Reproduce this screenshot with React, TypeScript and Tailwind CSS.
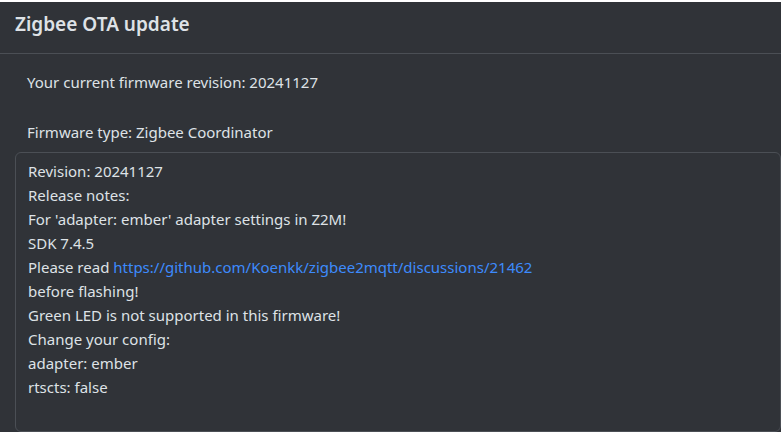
import React from "react";

export default function App() {
  const lines: React.ReactNode[] = [
    "Revision: 20241127",
    "Release notes:",
    "For 'adapter: ember' adapter settings in Z2M!",
    "SDK 7.4.5",
    <>
      Please read{" "}
      <a className="text-[#3d8bfd]" href="#">
        https://github.com/Koenkk/zigbee2mqtt/discussions/21462
      </a>
    </>,
    "before flashing!",
    "Green LED is not supported in this firmware!",
    "Change your config:",
    "adapter: ember",
    "rtscts: false",
  ];
  return (
    <div className="w-[782px] h-[434px] bg-white overflow-hidden" style={{ fontFamily: '"Noto Sans", sans-serif' }}>
      <div className="mt-[2px] w-[781px] h-[430px] bg-[#303338] text-[#dee2e6] flex flex-col overflow-hidden">
        <div className="h-[52px] border-b border-[#4b4f55] px-[15px] pt-[9px]">
          <h2 className="text-[19px] font-semibold leading-[26px]">Zigbee OTA update</h2>
        </div>
        <div className="flex-1 pl-[15px] pt-[16px] text-[15px] leading-[24px] flex flex-col">
          <div className="pl-[12px]">Your current firmware revision: 20241127</div>
          <div className="pl-[12px] mt-[26px]">Firmware type: Zigbee Coordinator</div>
          <div className="mt-[8px] flex-1 border border-[#4b4f55] rounded-[6px] pl-[12px] pt-[6px]">
            {lines.map((l, i) => (
              <div key={i}>{l}</div>
            ))}
          </div>
        </div>
      </div>
    </div>
  );
}
